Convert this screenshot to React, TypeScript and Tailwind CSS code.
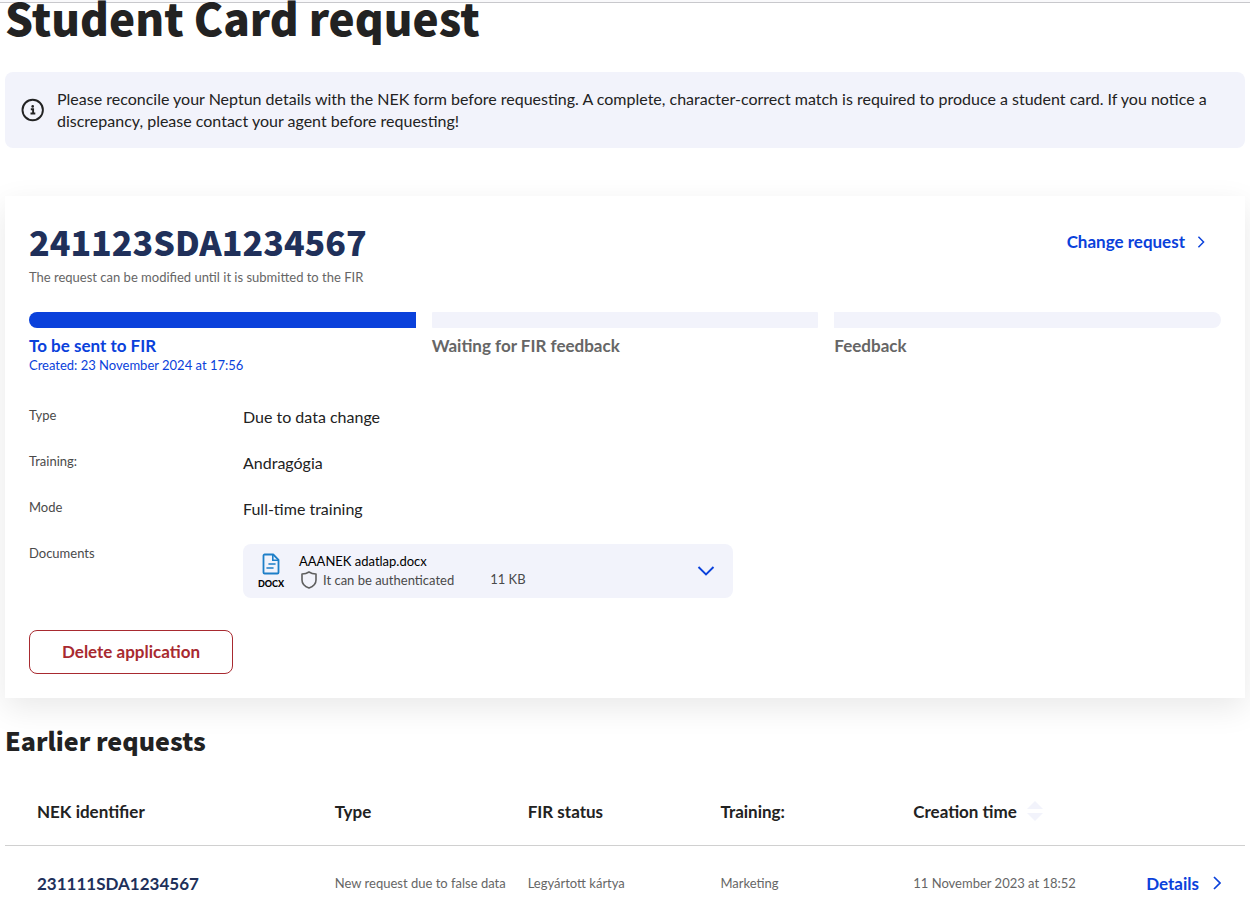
type Step = {
  label: string;
  note?: string;
  active?: boolean;
};

type EarlierRequest = {
  id: string;
  type: string;
  status: string;
  training: string;
  created: string;
};

const steps: Step[] = [
  {
    label: "To be sent to FIR",
    note: "Created: 23 November 2024 at 17:56",
    active: true,
  },
  { label: "Waiting for FIR feedback" },
  { label: "Feedback" },
];

const details = [
  { label: "Type", value: "Due to data change" },
  { label: "Training:", value: "Andragógia" },
  { label: "Mode", value: "Full-time training" },
];

const earlierRequests: EarlierRequest[] = [
  {
    id: "231111SDA1234567",
    type: "New request due to false data",
    status: "Legyártott kártya",
    training: "Marketing",
    created: "11 November 2023 at 18:52",
  },
];

function InfoIcon() {
  return (
    <svg viewBox="0 0 24 24" className="h-6 w-6 shrink-0" fill="none" aria-hidden="true">
      <circle cx="11.7" cy="12" r="10.2" stroke="#222" strokeWidth="1.9" />
      <circle cx="11.7" cy="8.4" r="1.3" fill="#222" />
      <path d="M9.800 11.300h2.300v4.100M9.500 15.500h4.800" stroke="#222" strokeWidth="1.9" />
    </svg>
  );
}

function ChevronRight({ className }: { className: string }) {
  return (
    <svg viewBox="0 0 8 14" className={className} fill="none" aria-hidden="true">
      <path d="M1 1l6 6-6 6" stroke="currentColor" strokeWidth="1.7" />
    </svg>
  );
}

function DocumentIcon() {
  return (
    <svg viewBox="0 0 18 22" className="h-[22px] w-[18px]" fill="none" aria-hidden="true">
      <path
        d="M2.6 1.5h8.6l5.3 5.3v12.6a1.1 1.1 0 0 1-1.1 1.1H2.6a1.1 1.1 0 0 1-1.1-1.1V2.6a1.1 1.1 0 0 1 1.1-1.1z"
        stroke="#1e7fc8"
        strokeWidth="1.8"
        strokeLinejoin="round"
      />
      <path d="M10.8 1.8v5.4h5.4M7 11h6M5 15h6" stroke="#1e7fc8" strokeWidth="1.6" strokeLinecap="round" />
    </svg>
  );
}

function ShieldIcon() {
  return (
    <svg viewBox="0 0 16 18" className="h-[18px] w-4" fill="none" aria-hidden="true">
      <path
        d="M8 1C6 2.4 3.4 3 1 3v6c0 4 3 6.600 7 8 4-1.400 7-4 7-8V3c-2.400 0-5-.6-7-2z"
        stroke="#5f5f5f"
        strokeWidth="1.6"
        strokeLinejoin="round"
      />
    </svg>
  );
}

function SortIcon() {
  return (
    <svg viewBox="0 0 16 20" className="h-5 w-4" fill="#f2f3fb" aria-hidden="true">
      <path d="M8 0l8 8H0zM8 20l8-8H0z" />
    </svg>
  );
}

function ProgressSteps() {
  return (
    <ol className="mt-6.5 grid grid-cols-3 gap-4">
      {steps.map((step) => (
        <li key={step.label} className="group">
          <div
            className={`h-4 rounded-[1px] group-first:rounded-l-full group-last:rounded-r-full ${
              step.active ? "bg-[#0a41db]" : "bg-[#f2f3fb]"
            }`}
          />
          <p
            className={`mt-2 text-[17px] leading-5 font-bold ${
              step.active ? "text-[#0a41db]" : "text-[#666]"
            }`}
          >
            {step.label}
          </p>
          {step.note && (
            <p className="text-[13px] leading-[18px] text-[#0a41db]">{step.note}</p>
          )}
        </li>
      ))}
    </ol>
  );
}

function DocumentItem() {
  return (
    <div className="flex h-[54px] w-full max-w-[490px] items-center rounded-lg bg-[#f2f3fb] px-4">
      <div className="flex w-6 flex-col items-center">
        <DocumentIcon />
        <span className="mt-1 text-[9px] leading-[10px] font-black text-black">DOCX</span>
      </div>
      <div className="ml-4">
        <p className="text-[13px] leading-[18px] text-black">AAANEK adatlap.docx</p>
        <p className="flex items-center gap-1.5 pl-0.5 text-[13px] leading-5 text-[#4a4a4a]">
          <ShieldIcon />
          It can be authenticated
        </p>
      </div>
      <p className="mt-4 ml-9 text-[13px] leading-5 text-[#4a4a4a]">11 KB</p>
      <button type="button" aria-label="Show document" className="ml-auto p-0.5 text-[#0a41db]">
        <svg viewBox="0 0 18 10" className="h-2.5 w-[18px]" fill="none" aria-hidden="true">
          <path d="M1.500 1L9 8.500 16.500 1" stroke="currentColor" strokeWidth="1.900" />
        </svg>
      </button>
    </div>
  );
}

function CurrentRequest() {
  return (
    <section className="mt-12 bg-white p-6 shadow-[0_10px_30px_rgba(0,0,0,0.09)]">
      <div className="flex items-start justify-between">
        <div>
          <h2 className="font-['Noto_Sans_CJK_SC',sans-serif] text-[34px] leading-11 font-black text-[#20305a]">
            241123SDA1234567
          </h2>
          <p className="mt-1 text-[13px] leading-[18px] text-[#666]">
            The request can be modified until it is submitted to the FIR
          </p>
        </div>
        <a
          href="#change"
          className="mt-2.5 mr-4 flex items-center gap-3 text-[17px] leading-6 font-bold text-[#0a41db]"
        >
          Change request
          <ChevronRight className="h-3 w-2" />
        </a>
      </div>
      <ProgressSteps />
      <dl className="mt-8 grid grid-cols-[214px_1fr] gap-y-6">
        {details.map((detail) => (
          <div key={detail.label} className="contents">
            <dt className="text-[13px] leading-[18px] text-[#4a4a4a]">{detail.label}</dt>
            <dd className="text-base leading-[22px] text-[#222]">{detail.value}</dd>
          </div>
        ))}
        <dt className="text-[13px] leading-[18px] text-[#4a4a4a]">Documents</dt>
        <dd>
          <DocumentItem />
        </dd>
      </dl>
      <button
        type="button"
        className="mt-8 h-11 rounded-lg border border-[#a82a30] px-8 text-[17px] font-bold text-[#a82a30]"
      >
        Delete application
      </button>
    </section>
  );
}

function EarlierRequests() {
  return (
    <section className="mt-6">
      <h2 className="font-['Noto_Sans_CJK_SC',sans-serif] text-[25px] leading-9 font-black text-[#222]">
        Earlier requests
      </h2>
      <table className="mt-5 w-full table-fixed text-left">
        <thead>
          <tr className="h-[67px] border-b border-[#d0d0d0] text-[17px] text-[#222]">
            <th className="w-[26.6%] pl-8 font-bold">NEK identifier</th>
            <th className="w-[15.55%] font-bold">Type</th>
            <th className="w-[15.55%] font-bold">FIR status</th>
            <th className="w-[15.55%] font-bold">Training:</th>
            <th className="w-[15.55%] font-bold">
              <button type="button" className="flex items-center gap-2.5">
                Creation time
                <SortIcon />
              </button>
            </th>
            <th aria-label="Details" />
          </tr>
        </thead>
        <tbody>
          {earlierRequests.map((request) => (
            <tr key={request.id} className="h-[76px] text-[13px] text-[#666]">
              <td className="pl-8 text-[17px] font-bold text-[#20305a]">{request.id}</td>
              <td className="whitespace-nowrap">{request.type}</td>
              <td>{request.status}</td>
              <td>{request.training}</td>
              <td>{request.created}</td>
              <td className="pr-6">
                <a
                  href="#details"
                  className="flex items-center justify-end gap-3.5 text-[17px] font-bold text-[#0a41db]"
                >
                  Details
                  <ChevronRight className="h-3.5 w-2" />
                </a>
              </td>
            </tr>
          ))}
        </tbody>
      </table>
    </section>
  );
}

export default function App() {
  return (
    <div className="h-screen overflow-hidden bg-white font-[Lato,sans-serif]">
      <div className="h-[3px] border-b border-[#c8c8cc] bg-[#f9f9fb]" />
      <main className="px-[5px]">
        <h1 className="-mt-1 font-['Noto_Sans_CJK_SC',sans-serif] text-[44px] leading-9 font-black text-[#222]">
          Student Card request
        </h1>
        <div className="mt-[37px] flex items-center gap-3 rounded-lg bg-[#f2f3fb] p-4">
          <InfoIcon />
          <p className="text-base leading-[22px] text-[#222]">
            Please reconcile your Neptun details with the NEK form before requesting. A complete,
            character-correct match is required to produce a student card. If you notice a
            discrepancy, please contact your agent before requesting!
          </p>
        </div>
        <CurrentRequest />
        <EarlierRequests />
      </main>
    </div>
  );
}
